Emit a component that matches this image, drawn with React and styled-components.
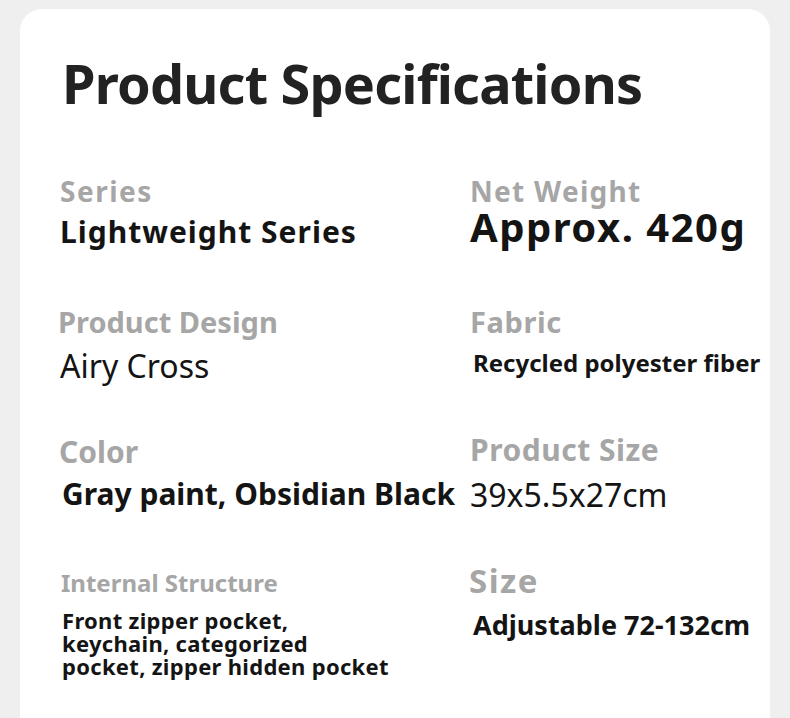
import React from 'react';
import styled, { createGlobalStyle } from 'styled-components';

const GlobalStyle = createGlobalStyle`
  html, body {
    margin: 0;
    padding: 0;
    background: #efefef;
    overflow: hidden;
  }
  body {
    font-family: 'Noto Sans', 'Open Sans', sans-serif;
  }
`;

const Page = styled.div`
  width: 790px;
  height: 718px;
  padding: 9px 0 0 20px;
  box-sizing: border-box;
`;

const Card = styled.div`
  width: 750px;
  height: 760px;
  background: #fff;
  border-radius: 22px;
  padding: 47px 0 0 40px;
  box-sizing: border-box;
`;

const Title = styled.h1`
  margin: 0 0 67px 2px;
  font-size: 54px;
  line-height: 1;
  font-weight: 700;
  letter-spacing: -0.8px;
  color: #222;
`;

const Grid = styled.div`
  display: grid;
  grid-template-columns: 410px 1fr;
  grid-auto-rows: 130px;
`;

const Cell = styled.div`
  display: flex;
  flex-direction: column;
  align-items: flex-start;
`;

const Label = styled.div`
  font-size: ${(p) => p.$size}px;
  line-height: 1;
  font-weight: 700;
  letter-spacing: ${(p) => p.$ls || 0}px;
  color: #a6a6a6;
  margin-top: ${(p) => p.$top || 0}px;
  margin-left: ${(p) => p.$left || 0}px;
  white-space: nowrap;
`;

const Value = styled.div`
  font-size: ${(p) => p.$size}px;
  line-height: ${(p) => p.$lh || 1};
  font-weight: ${(p) => (p.$light ? 400 : 700)};
  letter-spacing: ${(p) => p.$ls || 0}px;
  color: #141414;
  margin-top: ${(p) => p.$gap}px;
  margin-left: ${(p) => p.$left || 0}px;
  white-space: nowrap;
`;

const specs = [
  { label: 'Series', ls: 28, lls: 1.5, value: ['Lightweight Series'], vs: 30, vls: 1, gap: 12 },
  { label: 'Net Weight', ls: 28, lls: 1.3, value: ['Approx. 420g'], vs: 40, vls: 1.5, gap: 2 },
  { label: 'Product Design', ls: 29, ll: -2, value: ['Airy Cross'], vs: 32, gap: 14, light: true },
  { label: 'Fabric', ls: 29, lls: 0.6, value: ['Recycled polyester fiber'], vs: 24, gap: 15, vl: 3 },
  { label: 'Color', ls: 30, ll: -1, value: ['Gray paint, Obsidian Black'], vs: 30, gap: 12, vl: 2 },
  { label: 'Product Size', ls: 30, lls: 0.5, lt: -2, value: ['39x5.5x27cm'], vs: 32, gap: 14, light: true },
  {
    label: 'Internal Structure',
    ls: 24,
    lt: 4,
    ll: 1,
    value: ['Front zipper pocket,', 'keychain, categorized', 'pocket, zipper hidden pocket'],
    vs: 22,
    vls: 0.3,
    lh: 23 / 22,
    gap: 14,
    vl: 2,
  },
  { label: 'Size', ls: 33, lls: 1.5, lt: -3, ll: -1, value: ['Adjustable 72-132cm'], vs: 27, gap: 14, vl: 3 },
];

export default function App() {
  return (
    <>
      <GlobalStyle />
      <Page>
        <Card>
          <Title>Product Specifications</Title>
          <Grid>
            {specs.map((s) => (
              <Cell key={s.label}>
                <Label $size={s.ls} $ls={s.lls} $top={s.lt} $left={s.ll}>
                  {s.label}
                </Label>
                <Value
                  $size={s.vs}
                  $ls={s.vls}
                  $gap={s.gap}
                  $left={s.vl}
                  $light={s.light}
                  $lh={s.lh}
                >
                  {s.value.map((line, i) => (
                    <React.Fragment key={line}>
                      {i > 0 && <br />}
                      {line}
                    </React.Fragment>
                  ))}
                </Value>
              </Cell>
            ))}
          </Grid>
        </Card>
      </Page>
    </>
  );
}
